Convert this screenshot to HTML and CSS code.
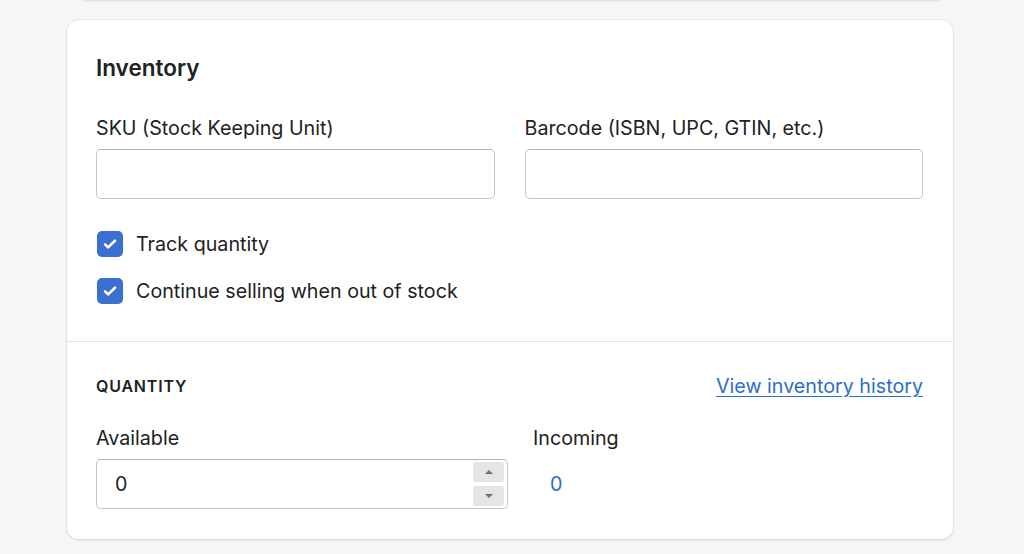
FILE: index.html
```html
<!DOCTYPE html>
<html>
<head>
<meta charset="utf-8">
<link rel="stylesheet" href="styles.css">
</head>
<body>
<div class="page">
  <div class="prev-card"></div>
  <div class="card">
    <div class="section top">
      <h2 class="title">Inventory</h2>
      <div class="fields">
        <div class="field">
          <label class="label">SKU (Stock Keeping Unit)</label>
          <div class="input"></div>
        </div>
        <div class="field">
          <label class="label">Barcode (ISBN, UPC, GTIN, etc.)</label>
          <div class="input"></div>
        </div>
      </div>
      <div class="checks">
        <div class="check">
          <span class="box"><svg viewBox="0 0 20 20" width="22" height="22"><path d="M5.5 10.3l2.8 2.8L14.5 7" fill="none" stroke="#fff" stroke-width="2.4" stroke-linecap="round" stroke-linejoin="round"/></svg></span>
          <span class="check-label">Track quantity</span>
        </div>
        <div class="check">
          <span class="box"><svg viewBox="0 0 20 20" width="22" height="22"><path d="M5.5 10.3l2.8 2.8L14.5 7" fill="none" stroke="#fff" stroke-width="2.4" stroke-linecap="round" stroke-linejoin="round"/></svg></span>
          <span class="check-label">Continue selling when out of stock</span>
        </div>
      </div>
    </div>
    <div class="section bottom">
      <div class="qty-head">
        <h3 class="subtitle">QUANTITY</h3>
        <a class="link" href="#">View inventory history</a>
      </div>
      <div class="qty-row">
        <div class="avail">
          <label class="label">Available</label>
          <div class="input num">
            <span class="value">0</span>
            <span class="spinner">
              <span class="spin"><svg viewBox="0 0 10 6" width="10" height="6"><path d="M1 5L5 1 9 5z" fill="#6d7175"/></svg></span>
              <span class="spin"><svg viewBox="0 0 10 6" width="10" height="6"><path d="M1 1L5 5 9 1z" fill="#6d7175"/></svg></span>
            </span>
          </div>
        </div>
        <div class="incoming">
          <label class="label">Incoming</label>
          <div class="inc-value">0</div>
        </div>
      </div>
    </div>
  </div>
</div>
</body>
</html>
```
FILE: styles.css
```css
* { box-sizing: border-box; }
html, body { margin: 0; padding: 0; }
body {
  background: #f6f6f7;
  font-family: Inter, "Noto Sans", sans-serif;
  color: #202223;
  width: 1024px;
  height: 554px;
  overflow: hidden;
}
.page {
  position: relative;
  padding: 20px 71px 0 67px;
}
.prev-card {
  position: absolute;
  left: 75px;
  right: 77px;
  top: -20px;
  height: 20px;
  background: #fff;
  border-radius: 0 0 12px 12px;
  box-shadow: 0 0 3px rgba(0,0,0,0.12), 0 1px 2px rgba(0,0,0,0.08);
}
.card {
  width: 886px;
  background: #fff;
  border-radius: 12px;
  box-shadow: 0 0 0 1px rgba(63,63,68,0.05), 0 1px 3px rgba(63,63,68,0.15);
}
.section { padding: 0 30px 0 29px; }
.section.top { padding-top: 34px; padding-bottom: 37px; border-bottom: 1px solid #e1e3e5; }
.title {
  margin: 0;
  font-size: 22.5px;
  line-height: 28px;
  font-weight: 600;
}
.fields {
  display: grid;
  grid-template-columns: 1fr 1fr;
  column-gap: 30px;
  margin-top: 34px;
}
.label {
  display: block;
  font-size: 19.7px;
  line-height: 24px;
  margin-bottom: 9px;
  color: #202223;
}
.input {
  height: 50px;
  border: 1px solid #c4c6c8;
  border-top-color: #aeb4b9;
  border-radius: 5px;
  background: #fff;
}
.checks {
  margin-top: 32px;
  display: flex;
  flex-direction: column;
  gap: 21px;
}
.check {
  display: flex;
  align-items: center;
  gap: 13px;
  height: 26px;
}
.box {
  width: 26px;
  height: 26px;
  margin-left: 1px;
  border-radius: 5px;
  background: #3b6fd0;
  display: flex;
  align-items: center;
  justify-content: center;
}
.check-label { font-size: 19.7px; line-height: 24px; }
.section.bottom { padding-top: 32px; padding-bottom: 30px; }
.qty-head {
  display: flex;
  justify-content: space-between;
  align-items: center;
  height: 24px;
}
.subtitle {
  margin: 0;
  font-size: 16px;
  font-weight: 600;
  letter-spacing: 0.8px;
  line-height: 24px;
}
.link {
  color: #2c6ecb;
  font-size: 19.7px;
  line-height: 24px;
  text-decoration: underline;
  text-underline-offset: 3px;
}
.qty-row {
  display: flex;
  gap: 25px;
  margin-top: 28px;
}
.avail { width: 412px; }
.input.num {
  display: flex;
  align-items: center;
  justify-content: space-between;
  padding: 0 3px 0 18px;
}
.value { font-size: 19.7px; }
.spinner {
  display: flex;
  flex-direction: column;
  gap: 4px;
}
.spin {
  width: 31px;
  height: 20px;
  background: #e4e5e7;
  border-radius: 3px;
  display: flex;
  align-items: center;
  justify-content: center;
}
.inc-value {
  height: 50px;
  display: flex;
  align-items: center;
  padding-left: 17px;
  color: #2c6ecb;
  font-size: 19.7px;
}
```
